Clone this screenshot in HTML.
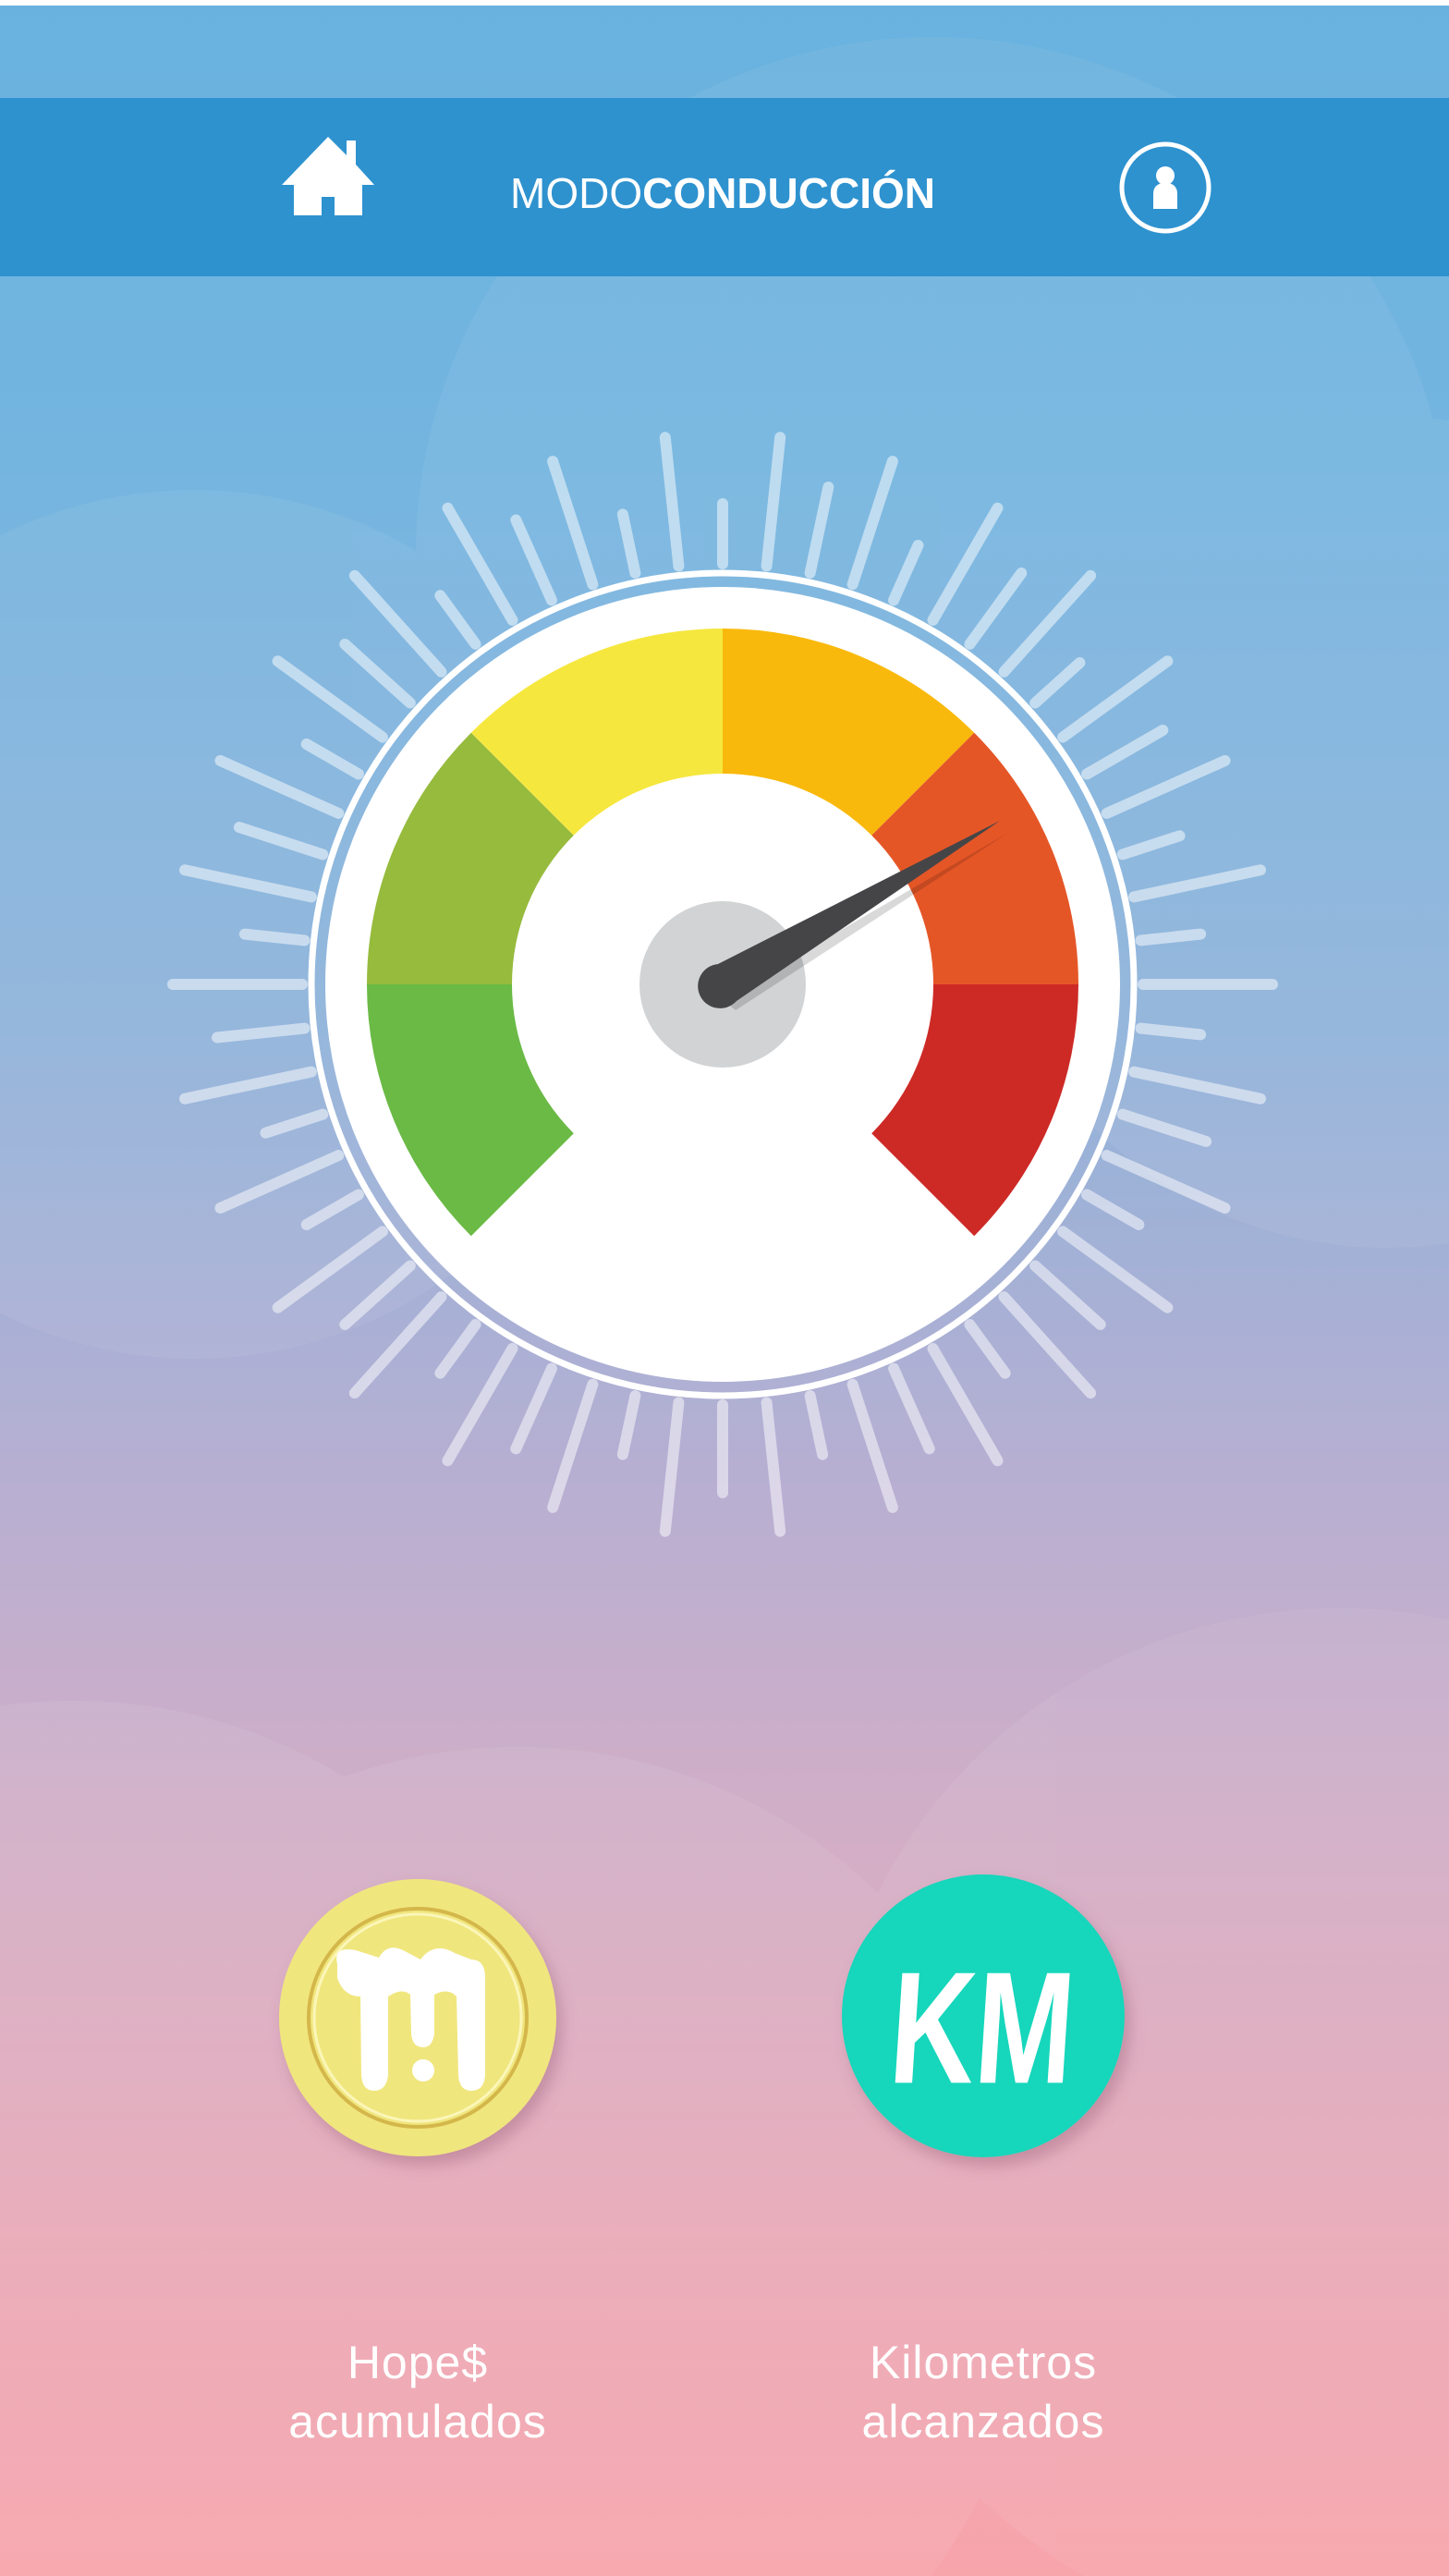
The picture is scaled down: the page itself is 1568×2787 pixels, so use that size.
<!DOCTYPE html>
<html><head><meta charset="utf-8"><style>
html,body{margin:0;padding:0;width:1568px;height:2787px;overflow:hidden}
body{position:relative;background:linear-gradient(180deg,#ffffff 0,#ffffff 6px,#69b2df 6px,#74b5e0 500px,#8fb3da 1100px,#b7afd2 1600px,#d3aec6 2000px,#e8a9b8 2400px,#f8a4ab 2787px);font-family:"Liberation Sans",sans-serif}
svg{position:absolute;left:0;top:0;display:block}
.lbl{position:absolute;color:#fff;font-size:50px;text-align:center;line-height:64px;width:500px;letter-spacing:1px}
</style></head><body>
<svg width="1568" height="2787" viewBox="0 0 1568 2787">
 <defs>
  <filter id="sh" x="-30%" y="-30%" width="160%" height="160%"><feDropShadow dx="6" dy="10" stdDeviation="8" flood-color="#8a4d6a" flood-opacity="0.35"/></filter>
  <line id="L" x1="0" y1="-455" x2="0" y2="-595"/>
  <line id="S" x1="0" y1="-455" x2="0" y2="-520"/>
  <line id="M" x1="0" y1="-455" x2="0" y2="-550"/>
 </defs>
 <g fill="#fff" opacity="0.06">
  <circle cx="1010" cy="600" r="560"/>
  <circle cx="210" cy="1000" r="470"/>
  <circle cx="1500" cy="900" r="450"/>
  <circle cx="560" cy="2450" r="560"/>
  <circle cx="1450" cy="2300" r="560"/>
  <circle cx="80" cy="2400" r="560"/>
 </g>
 <rect x="0" y="106" width="1568" height="193" fill="#2e92cf"/>
 <path d="M355 148 L305 200 L318 200 L318 233 L348 233 L348 213 L362 213 L362 233 L392 233 L392 200 L405 200 L385 178 L385 152 L375 152 L375 168 Z" fill="#fff"/>
 <text x="782" y="225" text-anchor="middle" font-size="46" fill="#fff">MODO<tspan font-weight="bold">CONDUCCIÓN</tspan></text>
 <circle cx="1261" cy="203" r="47" fill="none" stroke="#fff" stroke-width="5"/>
 <circle cx="1261" cy="190" r="10" fill="#fff"/>
 <path d="M1248 226 L1248 210 Q1248 198 1261 198 Q1274 198 1274 210 L1274 226 Z" fill="#fff"/>
 <g transform="translate(782,1065)" stroke="#fff" stroke-opacity="0.5" stroke-width="12" stroke-linecap="round">
  <use href="#S" transform="rotate(0)"/><use href="#L" transform="rotate(6)"/><use href="#M" transform="rotate(12)"/><use href="#L" transform="rotate(18)"/>
  <use href="#S" transform="rotate(24)"/><use href="#L" transform="rotate(30)"/><use href="#M" transform="rotate(36)"/><use href="#L" transform="rotate(42)"/>
  <use href="#S" transform="rotate(48)"/><use href="#L" transform="rotate(54)"/><use href="#M" transform="rotate(60)"/><use href="#L" transform="rotate(66)"/>
  <use href="#S" transform="rotate(72)"/><use href="#L" transform="rotate(78)"/><use href="#S" transform="rotate(84)"/><use href="#L" transform="rotate(90)"/>
  <use href="#S" transform="rotate(96)"/><use href="#L" transform="rotate(102)"/><use href="#M" transform="rotate(108)"/><use href="#L" transform="rotate(114)"/>
  <use href="#S" transform="rotate(120)"/><use href="#L" transform="rotate(126)"/><use href="#M" transform="rotate(132)"/><use href="#L" transform="rotate(138)"/>
  <use href="#S" transform="rotate(144)"/><use href="#L" transform="rotate(150)"/><use href="#M" transform="rotate(156)"/><use href="#L" transform="rotate(162)"/>
  <use href="#S" transform="rotate(168)"/><use href="#L" transform="rotate(174)"/><use href="#M" transform="rotate(180)"/><use href="#L" transform="rotate(186)"/>
  <use href="#S" transform="rotate(192)"/><use href="#L" transform="rotate(198)"/><use href="#M" transform="rotate(204)"/><use href="#L" transform="rotate(210)"/>
  <use href="#S" transform="rotate(216)"/><use href="#L" transform="rotate(222)"/><use href="#M" transform="rotate(228)"/><use href="#L" transform="rotate(234)"/>
  <use href="#S" transform="rotate(240)"/><use href="#L" transform="rotate(246)"/><use href="#S" transform="rotate(252)"/><use href="#L" transform="rotate(258)"/>
  <use href="#M" transform="rotate(264)"/><use href="#L" transform="rotate(270)"/><use href="#S" transform="rotate(276)"/><use href="#L" transform="rotate(282)"/>
  <use href="#M" transform="rotate(288)"/><use href="#L" transform="rotate(294)"/><use href="#S" transform="rotate(300)"/><use href="#L" transform="rotate(306)"/>
  <use href="#M" transform="rotate(312)"/><use href="#L" transform="rotate(318)"/><use href="#S" transform="rotate(324)"/><use href="#L" transform="rotate(330)"/>
  <use href="#M" transform="rotate(336)"/><use href="#L" transform="rotate(342)"/><use href="#S" transform="rotate(348)"/><use href="#L" transform="rotate(354)"/>
 </g>
 <circle cx="782" cy="1065" r="445" fill="none" stroke="#fff" stroke-width="7"/>
 <circle cx="782" cy="1065" r="430" fill="#fff"/>
 <g transform="translate(782,1065)">
  <path d="M-385 0 A385 385 0 0 0 -272.2 272.2 L-161.2 161.2 A228 228 0 0 1 -228 0 Z" fill="#6aba45"/>
  <path d="M-385 0 A385 385 0 0 1 -272.2 -272.2 L-161.2 -161.2 A228 228 0 0 0 -228 0 Z" fill="#96bb3d"/>
  <path d="M-272.2 -272.2 A385 385 0 0 1 0 -385 L0 -228 A228 228 0 0 0 -161.2 -161.2 Z" fill="#f6e73f"/>
  <path d="M0 -385 A385 385 0 0 1 272.2 -272.2 L161.2 -161.2 A228 228 0 0 0 0 -228 Z" fill="#f9b90c"/>
  <path d="M272.2 -272.2 A385 385 0 0 1 385 0 L228 0 A228 228 0 0 0 161.2 -161.2 Z" fill="#e55627"/>
  <path d="M385 0 A385 385 0 0 1 272.2 272.2 L161.2 161.2 A228 228 0 0 0 228 0 Z" fill="#cd2a26"/>
  <circle cx="0" cy="0" r="90" fill="#d1d3d4"/>
  <path d="M305 -170 L10 22 L-5 10 Z" fill="#000" opacity="0.15" transform="translate(4,6)"/>
  <path d="M300 -177 L-5 -22 A24 24 0 1 0 15 18 Z" fill="#454547"/>
 </g>
 <circle cx="452" cy="2183" r="150" fill="#f0e67e" filter="url(#sh)"/>
 <circle cx="452" cy="2183" r="118" fill="none" stroke="#d4b74a" stroke-width="4"/>
 <circle cx="452" cy="2183" r="112" fill="none" stroke="#fbf6b8" stroke-width="3"/>
 <path d="M365 2125 Q360 2105 385 2110 L410 2118 Q420 2100 440 2112 L455 2120 Q470 2100 492 2113 L510 2120 Q525 2120 525 2140 L525 2245 Q524 2262 510 2262 Q497 2262 496 2245 L494 2160 Q485 2150 470 2158 L470 2200 Q468 2215 458 2215 Q446 2215 445 2200 L444 2158 Q435 2150 420 2160 L420 2245 Q418 2262 405 2262 Q392 2262 391 2245 L390 2160 Q372 2160 365 2140 Z" fill="#fff"/>
 <circle cx="458" cy="2240" r="12" fill="#fff"/>
 <circle cx="1064" cy="2181" r="153" fill="#15d6bb" filter="url(#sh)"/>
 <text x="1064" y="2244" text-anchor="middle" font-size="150" font-weight="bold" fill="#fff" font-family="Liberation Sans Narrow, Liberation Sans, sans-serif" transform="translate(1064,2181) scale(0.85,1.15) skewX(-5) translate(-1064,-2181)">KM</text>
</svg>
<div class="lbl" style="left:202px;top:2524px">Hope$<br>acumulados</div>
<div class="lbl" style="left:814px;top:2524px">Kilometros<br>alcanzados</div>
</body></html>
